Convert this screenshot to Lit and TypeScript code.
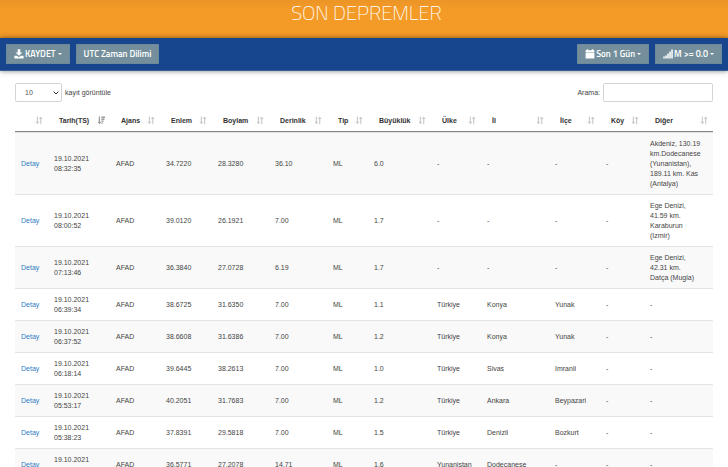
import { LitElement, html, css, svg } from "lit";
import { customElement, state } from "lit/decorators.js";

interface Column {
  label: string;
  width: number;
}

const columns: Column[] = [
  { label: "", width: 33 },
  { label: "Tarih(TS)", width: 62 },
  { label: "Ajans", width: 50 },
  { label: "Enlem", width: 52 },
  { label: "Boylam", width: 57 },
  { label: "Derinlik", width: 58 },
  { label: "Tip", width: 41 },
  { label: "Büyüklük", width: 63 },
  { label: "Ülke", width: 50 },
  { label: "İl", width: 68 },
  { label: "İlçe", width: 51 },
  { label: "Köy", width: 44 },
  { label: "Diğer", width: 69 },
];

const totalWidth = columns.reduce((sum, c) => sum + c.width, 0);

const quakes: string[][] = [
  ["19.10.2021 08:32:35", "AFAD", "34.7220", "28.3280", "36.10", "ML", "6.0", "-", "-", "-", "-", "Akdeniz, 130.19\nkm.Dodecanese\n(Yunanistan),\n189.11 km. Kas\n(Antalya)"],
  ["19.10.2021 08:00:52", "AFAD", "39.0120", "26.1921", "7.00", "ML", "1.7", "-", "-", "-", "-", "Ege Denizi,\n41.59 km.\nKaraburun\n(Izmir)"],
  ["19.10.2021 07:13:46", "AFAD", "36.3840", "27.0728", "6.19", "ML", "1.7", "-", "-", "-", "-", "Ege Denizi,\n42.31 km.\nDatça (Mugla)"],
  ["19.10.2021 06:39:34", "AFAD", "38.6725", "31.6350", "7.00", "ML", "1.1", "Türkiye", "Konya", "Yunak", "-", "-"],
  ["19.10.2021 06:37:52", "AFAD", "38.6608", "31.6386", "7.00", "ML", "1.2", "Türkiye", "Konya", "Yunak", "-", "-"],
  ["19.10.2021 06:18:14", "AFAD", "39.6445", "38.2613", "7.00", "ML", "1.0", "Türkiye", "Sivas", "Imranli", "-", "-"],
  ["19.10.2021 05:53:17", "AFAD", "40.2051", "31.7683", "7.00", "ML", "1.2", "Türkiye", "Ankara", "Beypazari", "-", "-"],
  ["19.10.2021 05:38:23", "AFAD", "37.8391", "29.5818", "7.00", "ML", "1.5", "Türkiye", "Denizli", "Bozkurt", "-", "-"],
  ["19.10.2021 05:15:56", "AFAD", "36.5771", "27.2078", "14.71", "ML", "1.6", "Yunanistan", "Dodecanese", "-", "-", "-"],
];

const arrowDown = svg`<path d="M1.8 0.5h1.2v5.2h1.4L2.4 8.2 0.4 5.7h1.4z"/>`;
const sortBoth = html`<svg class="sort" viewBox="0 0 8 9" aria-hidden="true">${arrowDown}<path d="M5.1 8.2h1.2V3h1.4L5.7 0.5 3.7 3h1.4z"/></svg>`;
const sortDesc = html`<svg class="sort active" viewBox="0 0 8 9" aria-hidden="true">${arrowDown}<path d="M4.4 0.6h3.6v1.3H4.4zM4.4 2.6h3v1.3h-3zM4.4 4.6h2.2v1.2H4.4zM4.4 6.5h1.4v1.2H4.4z"/></svg>`;

const downloadIcon = html`<svg class="icon" viewBox="0 0 10 10" aria-hidden="true"><path d="M3.7 0.2h2.6v3.2h2.2L5 6.8 1.5 3.4h2.2zM0.4 6.7h2.8L5 8.2l1.8-1.5h2.8v2.7H0.4z"/></svg>`;
const calendarIcon = html`<svg class="icon" viewBox="0 0 10 10" aria-hidden="true"><path d="M0.6 1.2h1.2V0.3h1.4v0.9h3.6V0.3h1.4v0.9h1.2v1.9H0.6zM0.6 3.6h8.8v5.9H0.6z"/></svg>`;
const signalIcon = html`<svg class="icon" viewBox="0 0 10 10" aria-hidden="true"><path d="M0.3 7.6h1.5v1.9H0.3zM2.3 6.4h1.5v3.1H2.3zM4.3 4.6h1.5v4.9H4.3zM6.3 2.6h1.5v6.9H6.3zM8.3 0.5h1.5v9H8.3z"/></svg>`;

@customElement("app-root")
export class AppRoot extends LitElement {
  static styles = css`
    :host {
      display: block;
      height: 100vh;
      overflow: hidden;
      background: #fff;
      color: #444;
      font: 7px/10px "Liberation Sans", Arial, sans-serif;
    }
    * {
      box-sizing: border-box;
    }
    .banner {
      height: 38px;
      background: linear-gradient(#ec9527, #f49b27 30%);
      display: flex;
      justify-content: center;
      padding-left: 5px;
    }
    h1 {
      margin: 0;
      font: 200 20px/26px "Titillium Web", Roboto, sans-serif;
      color: #fff;
    }
    nav {
      position: relative;
      display: flex;
      gap: 6px;
      padding: 6px;
      background: #17468f;
      border: solid #3b5f98;
      border-width: 0 0 1px;
      box-shadow: 0 0 5px rgba(0, 0, 0, 0.5);
    }
    .spacer {
      flex: 1;
    }
    nav button {
      display: flex;
      align-items: center;
      gap: 1px;
      height: 20px;
      padding: 0 7px;
      border: 1px solid #6a8a9c;
      background: #748f9b;
      color: #fff;
      font: 600 9px/12px "Titillium Web", "Open Sans", sans-serif;
    }
    .icon {
      width: 10px;
      height: 10px;
      fill: #fff;
    }
    .caret {
      border: 2px solid transparent;
      border-top-color: #fff;
      border-bottom: 0;
      margin-left: 1px;
    }
    main {
      padding: 12px 15px 0;
    }
    .controls {
      display: flex;
      justify-content: space-between;
      margin-bottom: 8px;
    }
    label {
      display: flex;
      align-items: center;
      gap: 3px;
    }
    .pick {
      display: grid;
      align-items: center;
    }
    .pick > * {
      grid-area: 1 / 1;
    }
    .chevron {
      width: 6px;
      height: 4px;
      margin-right: 3px;
      justify-self: end;
      fill: none;
      stroke: #333;
      pointer-events: none;
    }
    select,
    input {
      height: 19px;
      border: 1px solid #d4d4d4;
      border-radius: 2px;
      background: #fff;
      color: #555;
      font: inherit;
    }
    select {
      appearance: none;
      width: 47px;
      padding: 0 9px;
    }
    input {
      width: 110px;
      padding: 0 6px;
    }
    table {
      width: 100%;
      table-layout: fixed;
      border-collapse: separate;
      border-spacing: 0;
    }
    th {
      padding: 0 5px 0 11px;
      border-bottom: 1px solid #858585;
      text-align: left;
    }
    th button {
      display: flex;
      align-items: center;
      justify-content: space-between;
      width: 100%;
      height: 21px;
      padding: 0;
      border: 0;
      background: none;
      color: #333;
      font: 700 7px/10px "Liberation Sans", Arial, sans-serif;
    }
    .sort {
      width: 8px;
      height: 9px;
      margin-left: auto;
      flex: none;
      fill: #ccc;
    }
    .active {
      fill: #999;
    }
    td {
      padding: 6px 0 5px 6px;
      border-top: 1px solid #e4e4e4;
      vertical-align: middle;
      white-space: pre-line;
    }
    .date {
      padding-right: 15px;
    }
    tbody tr:nth-child(odd) {
      background: #f9f9f9;
    }
    a {
      color: #2f7cc4;
      text-decoration: none;
    }
  `;

  @state() private pageSize = "10";

  render() {
    return html`
      <header class="banner"><h1>SON DEPREMLER</h1></header>
      <nav>
        <button type="button">${downloadIcon}<span>KAYDET</span><span class="caret"></span></button>
        <button type="button">UTC Zaman Dilimi</button>
        <span class="spacer"></span>
        <button type="button">${calendarIcon}<span>Son 1 Gün</span><span class="caret"></span></button>
        <button type="button">${signalIcon}<span>M &gt;= 0.0</span><span class="caret"></span></button>
      </nav>
      <main>
        <div class="controls">
          <label for="size">
            <span class="pick">
              <select id="size" .value=${this.pageSize} @change=${(e: Event) => (this.pageSize = (e.target as HTMLSelectElement).value)}>
                <option>10</option>
                <option>25</option>
                <option>50</option>
              </select>
              <svg class="chevron" viewBox="0 0 6 4" aria-hidden="true"><path d="M0.6 0.6 3 3 5.4 0.6" /></svg>
            </span>
            kayıt görüntüle
          </label>
          <label for="search">Arama: <input id="search" type="search" /></label>
        </div>
        <table>
          <colgroup>
            ${columns.map((c) => html`<col style="width:${(c.width / totalWidth) * 100}%" />`)}
          </colgroup>
          <thead>
            <tr>
              ${columns.map((c, i) => html`<th scope="col"><button type="button" aria-label=${c.label || "Detay"}>${c.label}${i === 1 ? sortDesc : sortBoth}</button></th>`)}
            </tr>
          </thead>
          <tbody>
            ${quakes.map((q) => html`<tr><td><a href="#">Detay</a></td>${q.map((v, i) => html`<td class=${i === 0 ? "date" : "value"}>${v}</td>`)}</tr>`)}
          </tbody>
        </table>
      </main>
    `;
  }
}
